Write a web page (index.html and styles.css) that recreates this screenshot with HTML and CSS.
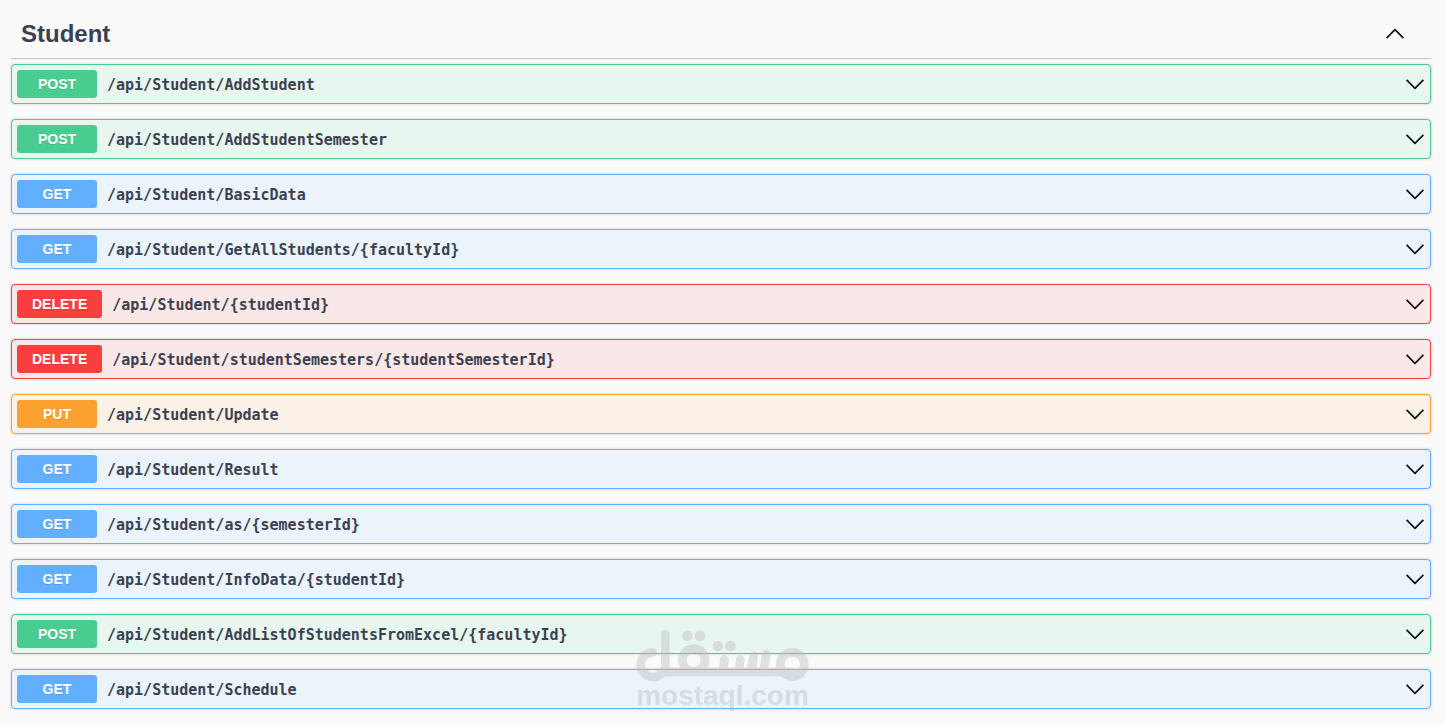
FILE: index.html
```html
<!DOCTYPE html>
<html lang="en">
<head>
    <meta charset="UTF-8">
    <meta name="viewport" content="width=device-width, initial-scale=1.0">
    <title>Student API</title>
    <link rel="stylesheet" href="styles.css">
</head>
<body>
    <!-- shared arrow icon -->
    <svg class="sprite" aria-hidden="true">
        <symbol id="arrow" viewBox="0 0 20 20">
            <path d="M1.6 5.9 L10 14.3 L18.4 5.9" fill="none" stroke="#101014" stroke-width="1.7" stroke-linejoin="round"/>
        </symbol>
    </svg>

    <main class="tag-section">
        <div class="tag-header">
            <h3>Student</h3>
            <button class="toggle open" aria-label="Collapse operation"><svg><use href="#arrow"/></svg></button>
        </div>

        <div class="operations">
            <button class="op post"><span class="method">POST</span><span class="path">/api/Student/AddStudent</span><svg><use href="#arrow"/></svg></button>
            <button class="op post"><span class="method">POST</span><span class="path">/api/Student/AddStudentSemester</span><svg><use href="#arrow"/></svg></button>
            <button class="op get"><span class="method">GET</span><span class="path">/api/Student/BasicData</span><svg><use href="#arrow"/></svg></button>
            <button class="op get"><span class="method">GET</span><span class="path">/api/Student/GetAllStudents/{facultyId}</span><svg><use href="#arrow"/></svg></button>
            <button class="op delete"><span class="method">DELETE</span><span class="path">/api/Student/{studentId}</span><svg><use href="#arrow"/></svg></button>
            <button class="op delete"><span class="method">DELETE</span><span class="path">/api/Student/studentSemesters/{studentSemesterId}</span><svg><use href="#arrow"/></svg></button>
            <button class="op put"><span class="method">PUT</span><span class="path">/api/Student/Update</span><svg><use href="#arrow"/></svg></button>
            <button class="op get"><span class="method">GET</span><span class="path">/api/Student/Result</span><svg><use href="#arrow"/></svg></button>
            <button class="op get"><span class="method">GET</span><span class="path">/api/Student/as/{semesterId}</span><svg><use href="#arrow"/></svg></button>
            <button class="op get"><span class="method">GET</span><span class="path">/api/Student/InfoData/{studentId}</span><svg><use href="#arrow"/></svg></button>
            <button class="op post"><span class="method">POST</span><span class="path">/api/Student/AddListOfStudentsFromExcel/{facultyId}</span><svg><use href="#arrow"/></svg></button>
            <button class="op get"><span class="method">GET</span><span class="path">/api/Student/Schedule</span><svg><use href="#arrow"/></svg></button>
        </div>
    </main>

    <div class="watermark">
        <svg viewBox="0 0 522 156" role="img" aria-label="مستقل">
            <g fill="none" stroke="#b9bcc0" stroke-width="26" stroke-linecap="round">
                <path d="M50 67 A37 37 0 1 0 88 103 V13"/>
                <path d="M76 126 H469"/>
                <circle cx="173" cy="90" r="34"/>
                <circle cx="469" cy="103" r="36"/>
                <path d="M265 88 L261 126 M313 88 L309 126 M353 78 L345 126 M391 73 L382 126"/>
            </g>
            <g fill="#b9bcc0">
                <circle cx="154" cy="17" r="16"/>
                <circle cx="192" cy="17" r="16"/>
                <circle cx="246" cy="48" r="16"/>
                <circle cx="283" cy="48" r="16"/>
            </g>
        </svg>
        <span>mostaql.com</span>
    </div>
</body>
</html>
```
FILE: styles.css
```css
* {
    box-sizing: border-box;
}

body {
    margin: 0;
    background: #fafafa;
    color: #3b4151;
    font-family: "Liberation Sans", Arial, sans-serif;
}

button {
    font: inherit;
    color: inherit;
    cursor: pointer;
}

.sprite {
    position: absolute;
    width: 0;
    height: 0;
}

.tag-section {
    padding: 9px 14px 16px 11px;
}

.tag-header {
    display: flex;
    align-items: center;
    justify-content: space-between;
    height: 50px;
    margin-bottom: 5px;
    padding: 0 26px 0 10px;
    border-bottom: 1px solid #c0c2c6;
}

.tag-header h3 {
    margin: 0;
    font-size: 24px;
    line-height: 28px;
}

.toggle {
    padding: 0;
    border: 0;
    background: none;
}

.tag-header svg,
.op svg {
    display: block;
    flex: none;
    width: 20px;
    height: 20px;
}

.toggle.open svg {
    transform: rotate(180deg);
}

.operations {
    display: flex;
    flex-direction: column;
    gap: 15px;
}

.op {
    display: flex;
    align-items: center;
    width: 100%;
    padding: 5px;
    border: 1px solid;
    border-radius: 4px;
    box-shadow: 0 0 3px rgba(0, 0, 0, .19);
    text-align: left;
}

.method {
    min-width: 80px;
    padding: 6px 15px;
    border-radius: 3px;
    color: #fff;
    font-size: 14px;
    font-weight: 700;
    line-height: 16px;
    text-align: center;
    text-shadow: 0 1px 0 rgba(0, 0, 0, .1);
}

.path {
    flex: 1;
    padding: 2px 10px 0;
    font-family: Consolas, "DejaVu Sans Mono", monospace;
    font-size: 15px;
    font-weight: 700;
    line-height: 20px;
}

.post {
    border-color: #49cc90;
    background: #e8f6f0;
}

.post .method {
    background: #49cc90;
}

.get {
    border-color: #61affe;
    background: #ebf3fb;
}

.get .method {
    background: #61affe;
}

.delete {
    border-color: #f93e3e;
    background: #fae7e7;
}

.delete .method {
    background: #f93e3e;
}

.put {
    border-color: #fca130;
    background: #fbf1e6;
}

.put .method {
    background: #fca130;
}

/* site watermark, sits over the list */
.watermark {
    position: fixed;
    bottom: 15px;
    left: 50%;
    display: flex;
    flex-direction: column;
    align-items: center;
    transform: translateX(-50%);
    opacity: .42;
    pointer-events: none;
}

.watermark svg {
    display: block;
    width: 174px;
    height: 52px;
}

.watermark span {
    color: #b9bcc0;
    font-size: 28px;
    font-weight: 700;
    line-height: 28px;
}
```
